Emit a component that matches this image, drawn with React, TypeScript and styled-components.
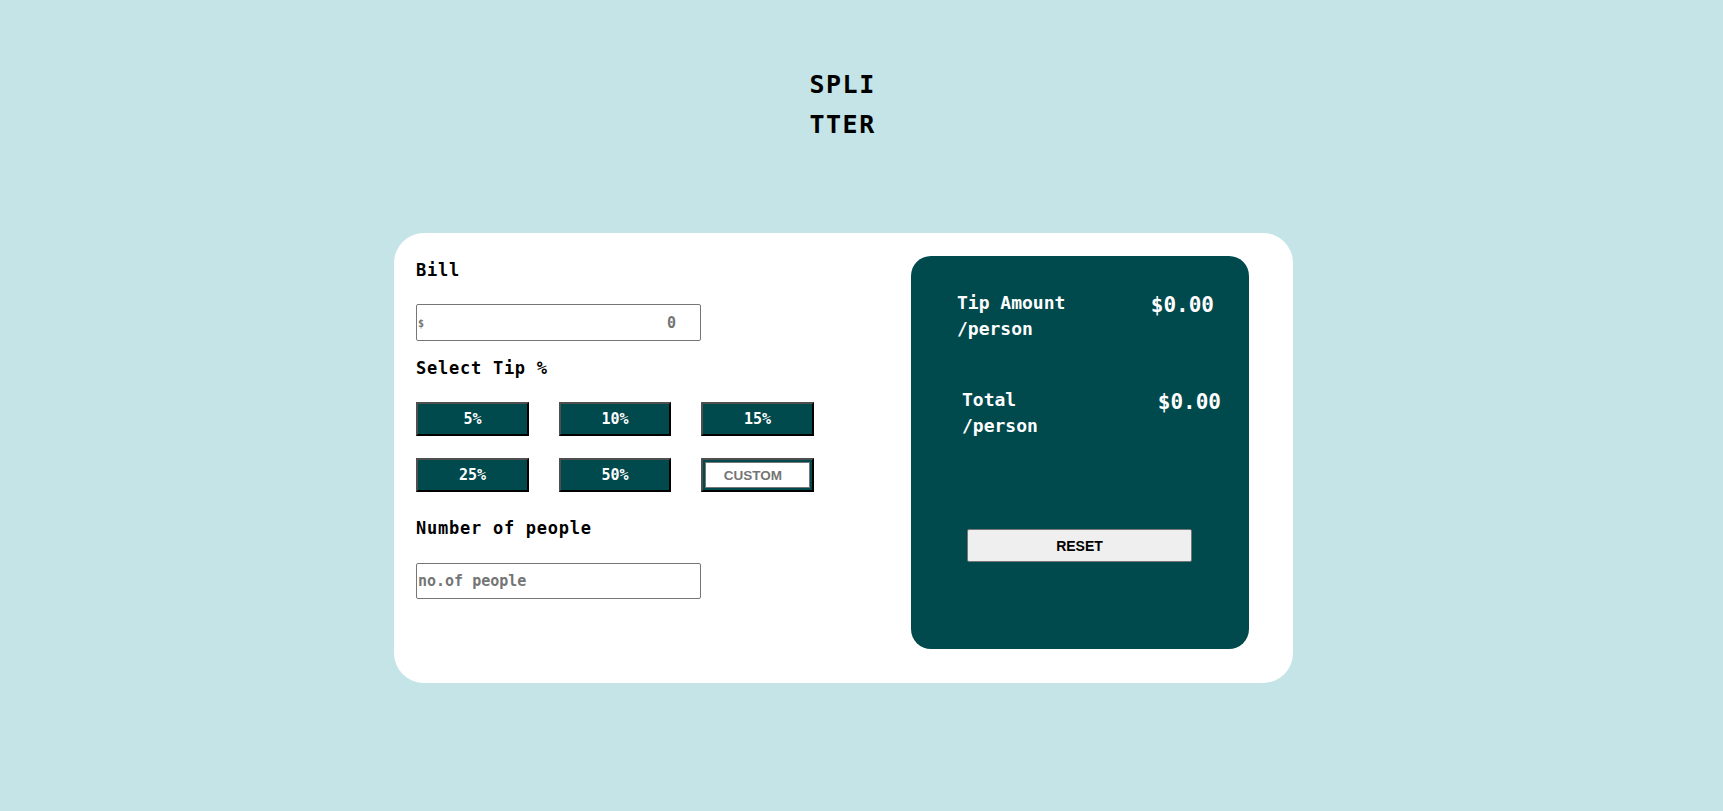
import React from "react";
import styled, { createGlobalStyle } from "styled-components";

const GlobalStyle = createGlobalStyle`
  html, body {
    margin: 0;
    padding: 0;
    background: #c5e4e7;
  }
  body {
    font-family: "DejaVu Sans Mono", "Liberation Mono", monospace;
  }
  * { box-sizing: border-box; }
`;

const Page = styled.div`
  min-height: 811px;
  padding-right: 36px;
  display: flex;
  flex-direction: column;
  align-items: center;
`;

const Title = styled.h1`
  margin: 65px 0 0;
  width: 68px;
  font-size: 25px;
  line-height: 40px;
  letter-spacing: 1.5px;
  font-weight: bold;
  color: #000;
  word-break: break-all;
`;

const Card = styled.main`
  margin-top: 88px;
  width: 899px;
  height: 450px;
  background: #fff;
  border-radius: 30px;
  padding: 23px 44px 34px 22px;
  display: flex;
  justify-content: space-between;
  align-items: flex-start;
`;

const Form = styled.section`
  display: flex;
  flex-direction: column;
  align-items: flex-start;
`;

const Label = styled.label<{ $mt?: number }>`
  display: block;
  margin-top: ${(p) => p.$mt ?? 0}px;
  font-size: 17px;
  line-height: 24px;
  letter-spacing: 0.75px;
  font-weight: bold;
  color: #000;
`;

const Field = styled.div<{ $mt: number }>`
  position: relative;
  margin-top: ${(p) => p.$mt}px;
`;

const TextInput = styled.input<{ $h: number; $align?: string }>`
  display: block;
  width: 285px;
  height: ${(p) => p.$h}px;
  border: 1px solid #767676;
  border-radius: 2px;
  background: #fff;
  padding: 0 ${(p) => (p.$align === "right" ? 24 : 1)}px 0 1px;
  text-align: ${(p) => p.$align ?? "left"};
  font-family: "DejaVu Sans Mono", monospace;
  font-size: 15px;
  font-weight: bold;
  color: #000;
  outline: none;
  &::placeholder {
    color: #757575;
  }
`;

const Currency = styled.span`
  position: absolute;
  left: 2px;
  top: 50%;
  transform: translateY(-50%);
  font-size: 10px;
  font-weight: bold;
  color: #757575;
`;

const TipGrid = styled.div`
  margin-top: 22px;
  display: grid;
  grid-template-columns: 113px 112px 113px;
  grid-auto-rows: 34px;
  column-gap: 30px;
  row-gap: 22px;
`;

const TipButton = styled.button`
  margin: 0;
  padding: 0;
  background: #00494d;
  border-width: 2px;
  border-style: solid;
  border-color: #4f4f4f #000 #000 #4f4f4f;
  color: #fff;
  font-family: "DejaVu Sans Mono", monospace;
  font-size: 15px;
  font-weight: bold;
  cursor: pointer;
`;

const CustomBox = styled.div`
  background: #00494d;
  border-width: 2px;
  border-style: solid;
  border-color: #4f4f4f #000 #000 #4f4f4f;
  padding: 2px;
  display: flex;
`;

const CustomInput = styled.input`
  flex: 1;
  width: 100%;
  min-width: 0;
  border: 1px solid #767676;
  background: #fff;
  text-align: center;
  font-family: "Liberation Sans", Arial, sans-serif;
  font-size: 13.5px;
  font-weight: bold;
  outline: none;
  padding: 1px 9px 0 0;
  &::placeholder {
    color: #757575;
  }
`;

const Panel = styled.section`
  width: 338px;
  height: 393px;
  background: #00494d;
  border-radius: 20px;
  padding-top: 34px;
  display: flex;
  flex-direction: column;
`;

const ResultRow = styled.div<{ $left: number; $right: number; $mt: number }>`
  margin-top: ${(p) => p.$mt}px;
  padding: 0 ${(p) => p.$right}px 0 ${(p) => p.$left}px;
  display: flex;
  justify-content: space-between;
  align-items: flex-start;
`;

const ResultLabel = styled.div`
  font-size: 18px;
  line-height: 26px;
  font-weight: bold;
  color: #fff;
`;

const ResultValue = styled.div`
  padding-top: 2px;
  font-size: 21px;
  line-height: 27px;
  font-weight: bold;
  color: #fff;
`;

const ResetButton = styled.button`
  margin: 90px 0 0 56px;
  width: 225px;
  height: 33px;
  background: #efefef;
  border: 1px solid #767676;
  border-radius: 2px;
  font-family: "Liberation Sans", Arial, sans-serif;
  font-size: 14px;
  font-weight: bold;
  color: #000;
  cursor: pointer;
`;

const tips = ["5%", "10%", "15%", "25%", "50%"];

export default function App() {
  return (
    <>
      <GlobalStyle />
      <Page>
        <Title>SPLITTER</Title>
        <Card>
          <Form>
            <Label $mt={2}>Bill</Label>
            <Field $mt={22}>
              <Currency>$</Currency>
              <TextInput $h={37} $align="right" placeholder="0" />
            </Field>
            <Label $mt={15}>Select Tip %</Label>
            <TipGrid>
              {tips.map((t) => (
                <TipButton key={t}>{t}</TipButton>
              ))}
              <CustomBox>
                <CustomInput placeholder="CUSTOM" />
              </CustomBox>
            </TipGrid>
            <Label $mt={24}>Number of people</Label>
            <Field $mt={23}>
              <TextInput $h={36} placeholder="no.of people" />
            </Field>
          </Form>
          <Panel>
            <ResultRow $left={46} $right={35} $mt={0}>
              <ResultLabel>
                Tip Amount
                <br />
                /person
              </ResultLabel>
              <ResultValue>$0.00</ResultValue>
            </ResultRow>
            <ResultRow $left={51} $right={28} $mt={45}>
              <ResultLabel>
                Total
                <br />
                /person
              </ResultLabel>
              <ResultValue>$0.00</ResultValue>
            </ResultRow>
            <ResetButton>RESET</ResetButton>
          </Panel>
        </Card>
      </Page>
    </>
  );
}
